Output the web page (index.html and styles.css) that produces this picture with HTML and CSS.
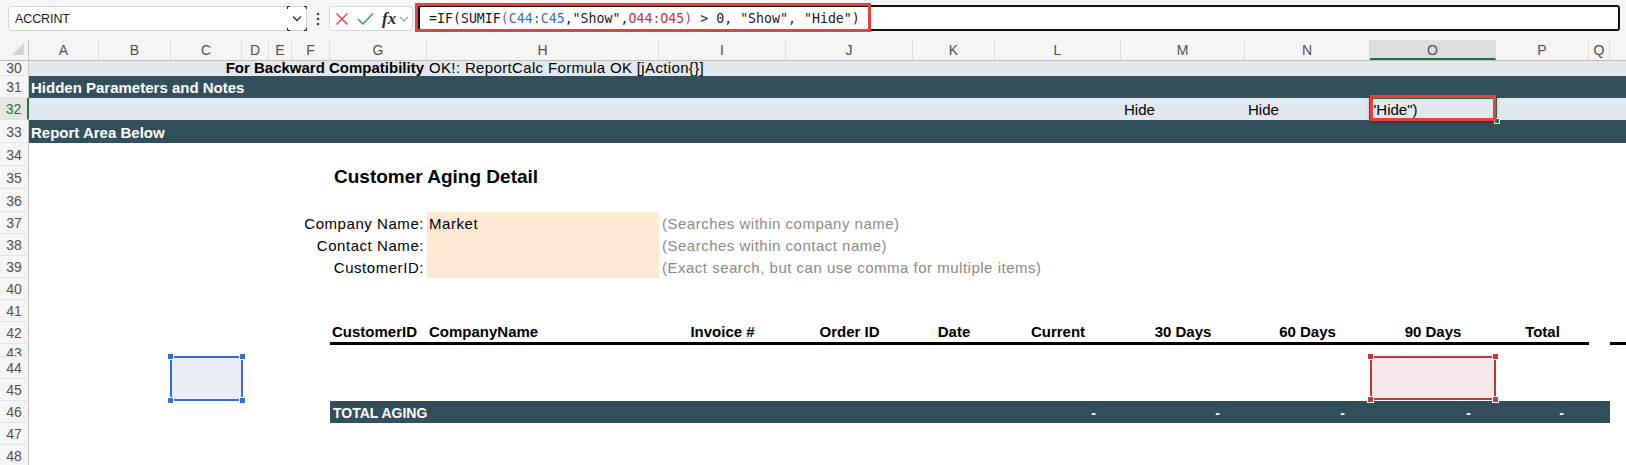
FILE: index.html
```html
<!DOCTYPE html>
<html>
<head>
<meta charset="utf-8">
<title>Customer Aging Detail</title>
<link rel="stylesheet" href="styles.css">
</head>
<body>
<div class="app">
  <div class="toolbar">
    <div class="namebox">
      <span class="nb-text">ACCRINT</span>
      <span class="nb-drop">
        <svg width="20" height="25" viewBox="0 0 20 25">
          <path d="M0.5 3 V0.5 H3 M17 0.5 H19.5 V3 M0.5 22 V24.5 H3 M17 24.5 H19.5 V22" fill="none" stroke="#222" stroke-width="1"/>
          <path d="M6 10.5 L10 14.5 L14 10.5" fill="none" stroke="#333" stroke-width="1.3"/>
        </svg>
      </span>
    </div>
    <div class="kebab">
      <svg width="6" height="14" viewBox="0 0 6 14"><circle cx="3" cy="2" r="1.3" fill="#444"/><circle cx="3" cy="7" r="1.3" fill="#444"/><circle cx="3" cy="12" r="1.3" fill="#444"/></svg>
    </div>
    <div class="fbtns">
      <svg class="ic" width="14" height="14" viewBox="0 0 14 14"><path d="M1.5 1.5 L12.5 12.5 M12.5 1.5 L1.5 12.5" stroke="#e5484d" stroke-width="1.5" fill="none"/></svg>
      <svg class="ic" width="17" height="14" viewBox="0 0 17 14"><path d="M1 7 L6 12 L16 1.5" stroke="#3a9a52" stroke-width="1.5" fill="none"/></svg>
      <span class="fx">fx</span>
      <svg class="ic-sm" width="10" height="6" viewBox="0 0 10 6"><path d="M1 1 L5 5 L9 1" stroke="#999" stroke-width="1.1" fill="none"/></svg>
    </div>
    <div class="fbar"><span class="ftext">=IF(SUMIF<span class="fp">(</span><span class="fb">C44:C45</span>,"Show",<span class="fr">O44:O45</span><span class="fp">)</span> &gt; 0, "Show", "Hide")</span></div>
    <div class="annot annot-formula"></div>
  </div>

  <div class="sheet">
    <div class="row hdr">
      <div class="corner"><svg width="12" height="12" viewBox="0 0 12 12"><path d="M12 0 V12 H0 Z" fill="#d4d4d4"/></svg></div>
      <div class="ch">A</div><div class="ch">B</div><div class="ch">C</div><div class="ch">D</div><div class="ch">E</div><div class="ch">F</div><div class="ch">G</div><div class="ch">H</div><div class="ch">I</div><div class="ch">J</div><div class="ch">K</div><div class="ch">L</div><div class="ch">M</div><div class="ch">N</div><div class="ch active">O</div><div class="ch">P</div><div class="ch">Q</div><div class="ch last"></div>
    </div>

    <div class="row r15 light">
      <div class="rh">30</div>
      <div class="c span-ag right bold">For Backward Compatibility</div>
      <div class="c span-h-end ok">OK!: ReportCalc Formula OK [jAction{}]</div>
    </div>
    <div class="row r22 dark">
      <div class="rh">31</div>
      <div class="c span-all bold band-text">Hidden Parameters and Notes</div>
    </div>
    <div class="row r22 light">
      <div class="rh sel">32</div>
      <div class="c span-a-l"></div>
      <div class="c col-m">Hide</div>
      <div class="c col-n">Hide</div>
      <div class="c col-o activecell">"Hide")<i class="fillhandle"></i></div>
      <div class="c span-p-end"></div>
    </div>
    <div class="row r23 dark">
      <div class="rh">33</div>
      <div class="c span-all bold band-text">Report Area Below</div>
    </div>
    <div class="row r23"><div class="rh">34</div></div>
    <div class="row r23">
      <div class="rh">35</div>
      <div class="c col-g-end title">Customer Aging Detail</div>
    </div>
    <div class="row r23"><div class="rh">36</div></div>
    <div class="row r22">
      <div class="rh">37</div>
      <div class="c span-ag right rep">Company Name:</div>
      <div class="c col-h input rep">Market</div>
      <div class="c span-i-end hint">(Searches within company name)</div>
    </div>
    <div class="row r22">
      <div class="rh">38</div>
      <div class="c span-ag right rep">Contact Name:</div>
      <div class="c col-h input rep"></div>
      <div class="c span-i-end hint">(Searches within contact name)</div>
    </div>
    <div class="row r22">
      <div class="rh">39</div>
      <div class="c span-ag right rep">CustomerID:</div>
      <div class="c col-h input rep"></div>
      <div class="c span-i-end hint">(Exact search, but can use comma for multiple items)</div>
    </div>
    <div class="row r22"><div class="rh">40</div></div>
    <div class="row r22"><div class="rh">41</div></div>
    <div class="row r22">
      <div class="rh">42</div>
      <div class="c th col-g">CustomerID</div>
      <div class="c th col-h">CompanyName</div>
      <div class="c th col-i center">Invoice #</div>
      <div class="c th col-j center">Order ID</div>
      <div class="c th col-k center">Date</div>
      <div class="c th col-l center">Current</div>
      <div class="c th col-m center">30 Days</div>
      <div class="c th col-n center">60 Days</div>
      <div class="c th col-o center">90 Days</div>
      <div class="c th col-p center">Total</div>
      <div class="c th col-r"></div>
    </div>
    <div class="row r13"><div class="rh clip">43</div></div>
    <div class="row r22"><div class="rh">44</div></div>
    <div class="row r22"><div class="rh">45</div></div>
    <div class="row r22">
      <div class="rh">46</div>
      <div class="c total span-g-k bold">TOTAL AGING</div>
      <div class="c total col-l dash">-</div>
      <div class="c total col-m dash">-</div>
      <div class="c total col-n dash">-</div>
      <div class="c total col-o dash">-</div>
      <div class="c total col-p dash">-</div>
      <div class="c total col-q"></div>
    </div>
    <div class="row r22"><div class="rh">47</div></div>
    <div class="row r22"><div class="rh">48</div></div>

    <div class="shape shape-blue"><i class="hd tl"></i><i class="hd tr"></i><i class="hd bl"></i><i class="hd br"></i></div>
    <div class="shape shape-red"><i class="hd tl"></i><i class="hd tr"></i><i class="hd bl"></i><i class="hd br"></i></div>
    <div class="annot annot-cell"></div>
  </div>
</div>
</body>
</html>
```

FILE: styles.css
```css
* { box-sizing: border-box; }
html, body { margin: 0; padding: 0; }
body {
  width: 1626px;
  height: 465px;
  overflow: hidden;
  background: #ffffff;
  font-family: "Liberation Sans", Arial, sans-serif;
  color: #000;
}
.app { width: 1626px; }

/* ---------- toolbar ---------- */
.toolbar {
  position: relative;
  height: 40px;
  background: #f5f5f5;
  display: flex;
  align-items: flex-start;
  padding-top: 6px;
}
.namebox {
  margin-left: 8px;
  width: 299px;
  height: 25px;
  background: #fff;
  border: 1px solid #d2d2d2;
  border-radius: 4px;
  display: flex;
  align-items: center;
  justify-content: space-between;
}
.nb-text {
  padding-left: 6px;
  font-size: 12.5px;
  color: #1a1a1a;
  letter-spacing: -0.1px;
}
.nb-drop { display: flex; width: 20px; height: 25px; margin-right: -1px; }
.kebab {
  width: 22px;
  height: 25px;
  display: flex;
  align-items: center;
  justify-content: center;
}
.fbtns {
  width: 84px;
  height: 25px;
  background: #fff;
  border: 1px solid #d6d6d6;
  border-radius: 4px;
  display: flex;
  align-items: center;
  padding-left: 5px;
}
.fbtns .ic { margin-right: 8px; }
.fx {
  font-family: "Liberation Serif", "Times New Roman", serif;
  font-style: italic;
  font-weight: bold;
  font-size: 17px;
  color: #2b2b2b;
  margin-right: 3px;
  line-height: 20px;
}
.fbar {
  margin-left: 5px;
  margin-top: -1px;
  width: 1202px;
  height: 26px;
  background: #fff;
  border: 2px solid #111;
  border-radius: 3px;
  padding-left: 9px;
  padding-top: 1px;
}
.ftext {
  font-family: "DejaVu Sans Mono", "Liberation Mono", monospace;
  font-size: 13.25px;
  line-height: 22px;
  white-space: pre;
  color: #1a1a1a;
}
.fb { color: #2f6fc0; }
.fr { color: #c8304a; }
.fp { color: #c43b7a; }

.annot {
  position: absolute;
  border: 3px solid #e8403f;
  pointer-events: none;
}
.annot-formula { left: 415px; top: 3px; width: 456px; height: 29px; }
.annot-cell {
  left: 1370px; top: 55px; width: 126px; height: 26px;
  box-shadow: 0 2px 4px rgba(0,0,0,0.28);
}

/* ---------- sheet ---------- */
.sheet {
  position: relative;
  --cols: 29px 70px 72px 71px 27px 23px 38px 97px 232px 127px 127px 82px 126px 124px 125px 126px 93px 21px 1fr;
}
.row {
  display: grid;
  grid-template-columns: var(--cols);
  grid-template-rows: 100%;
}
.r13 { height: 13px; }
.r15 { height: 15px; }
.r22 { height: 22px; }
.r23 { height: 23px; }

.hdr {
  height: 21px;
  background: #f5f5f5;
  border-bottom: 1px solid #bdbdbd;
}
.corner {
  border-right: 1px solid #c8c8c8;
  display: flex;
  align-items: flex-end;
  justify-content: flex-end;
  padding: 0 4px 5px 0;
}
.ch {
  font-size: 14px;
  color: #505050;
  text-align: center;
  line-height: 20px;
  border-right: 1px solid #dcdcdc;
}
.ch.active {
  background: #dedede;
  border-bottom: 2px solid #217346;
  line-height: 18px;
  padding-top: 1px;
}
.ch.last { border-right: none; }

.rh {
  grid-column: 1;
  background: #f5f5f5;
  border-right: 1px solid #c8c8c8;
  border-bottom: 1px solid #e3e3e3;
  font-size: 14px;
  color: #505050;
  text-align: center;
  display: flex;
  align-items: center;
  justify-content: center;
  padding-top: 1px;
}
.r15 .rh { line-height: 14px; padding-top: 0; }
.rh.sel {
  color: #217346;
  background: #e6e6e6;
  border-right: 2px solid #217346;
}
.rh.clip { overflow: hidden; align-items: flex-end; padding-top: 0; line-height: 6px; }

.light { background: #e1e9ef; }
.dark { background: #344f5c; }
.light .rh, .dark .rh { background: #f5f5f5; }
.light .rh.sel { background: #e6e6e6; }

.c {
  font-size: 15px;
  line-height: 18px;
  white-space: nowrap;
  display: flex;
  align-items: flex-end;
  padding: 0 3px 1px 3px;
  min-width: 0;
}
.r15 .c { line-height: 13px; padding-bottom: 2px; }
.right { justify-content: flex-end; }
.center { justify-content: center; }
.bold { font-weight: bold; }

.span-ag { grid-column: 2 / 9; }
.span-all { grid-column: 2 / -1; }
.span-h-end { grid-column: 9 / -1; }
.span-i-end { grid-column: 10 / -1; }
.span-a-l { grid-column: 2 / 14; }
.span-p-end { grid-column: 17 / -1; }
.span-g-k { grid-column: 8 / 13; }
.col-g-end { grid-column: 8 / -1; }
.col-g { grid-column: 8; }
.col-h { grid-column: 9; }
.col-i { grid-column: 10; }
.col-j { grid-column: 11; }
.col-k { grid-column: 12; }
.col-l { grid-column: 13; }
.col-m { grid-column: 14; }
.col-n { grid-column: 15; }
.col-o { grid-column: 16; }
.col-p { grid-column: 17; }
.col-q { grid-column: 18; }
.col-r { grid-column: 19; }

.ok { padding-left: 2px; letter-spacing: 0.35px; }
.band-text { color: #fff; padding-left: 2px; }

.activecell {
  position: relative;
  padding-left: 1px;
  outline: 2px solid #217346;
  outline-offset: -1px;
}
.fillhandle {
  position: absolute;
  right: -4px;
  bottom: -4px;
  width: 6px;
  height: 6px;
  background: #217346;
  border: 1px solid #fff;
}

.title {
  font-size: 19px;
  font-weight: bold;
  line-height: 22px;
  padding-left: 4px;
  padding-bottom: 1px;
}
.rep { letter-spacing: 0.55px; }
.input { background: #fde9d4; padding-left: 2px; }
.hint { color: #8a8a8a; letter-spacing: 0.5px; padding-left: 3px; }

.th {
  font-weight: bold;
  align-self: start;
  height: 23px;
  border-bottom: 3px solid #000;
  padding-bottom: 1px;
}
.col-g.th { padding-left: 2px; }
.col-h.th { padding-left: 2px; }

.total { background: #344f5c; color: #fff; font-size: 14px; }
.total.bold { padding-left: 3px; }
.dash { justify-content: flex-end; padding-right: 25px; font-weight: bold; }

/* ---------- shapes ---------- */
.shape {
  position: absolute;
  border: 2px solid;
}
.shape-blue {
  left: 170px; top: 316px; width: 73px; height: 45px;
  border-color: #3a6ccc;
  background: #e9eef9;
}
.shape-red {
  left: 1370px; top: 316px; width: 126px; height: 44px;
  border-color: #c4373f;
  background: #f9e8e9;
}
.hd {
  position: absolute;
  width: 7px;
  height: 7px;
  border: 1px solid #fff;
}
.shape-blue .hd { background: #3a6ccc; }
.shape-red .hd { background: #c4373f; }
.hd.tl { left: -5px; top: -5px; }
.hd.tr { right: -5px; top: -5px; }
.hd.bl { left: -5px; bottom: -5px; }
.hd.br { right: -5px; bottom: -5px; }
```
